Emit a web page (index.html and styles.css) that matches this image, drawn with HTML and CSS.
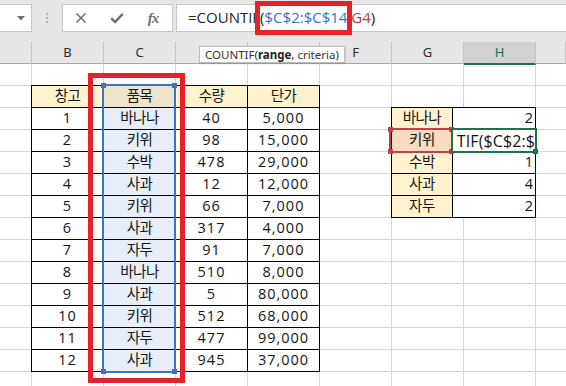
FILE: index.html
```html
<!DOCTYPE html>
<html lang="ko">
<head>
<meta charset="utf-8">
<title>COUNTIF</title>
<link rel="stylesheet" href="styles.css">
</head>
<body>
<div class="app">
  <div class="top">
    <div class="fbar">
      <div class="namebox">
        <svg class="caret" width="8" height="5" viewBox="0 0 8 5"><path d="M0 0H8L4 4.5Z" fill="#6f6f6f"/></svg>
      </div>
      <div class="grip"><i></i><i></i><i></i></div>
      <div class="btns">
        <span class="btn">
          <svg width="12" height="12" viewBox="0 0 12 12"><path d="M1.5 1.5L10.5 10.5M10.5 1.5L1.5 10.5" stroke="#6f6f6f" stroke-width="1.6" fill="none"/></svg>
        </span>
        <span class="btn">
          <svg width="14" height="12" viewBox="0 0 14 12"><path d="M1.2 6.2L5 10L12.8 1.8" stroke="#6f6f6f" stroke-width="2.4" fill="none"/></svg>
        </span>
        <span class="btn fx">fx</span>
      </div>
      <div class="finput"><span>=COUNTIF(</span><span class="ref1">$C$2:$C$14</span><span>,</span><span class="ref2">G4</span><span>)</span></div>
    </div>
    <div class="cols">
      <div class="ch"></div>
      <div class="ch">B</div>
      <div class="ch">C</div>
      <div class="ch">D</div>
      <div class="ch">E</div>
      <div class="ch">F</div>
      <div class="ch">G</div>
      <div class="ch ch-sel">H</div>
      <div class="ch"></div>
    </div>
  </div>

  <div class="sheet">
    <div class="tbl tbl-main">
      <div class="c hd">창고</div><div class="c hd csel-hd">품목</div><div class="c hd">수량</div><div class="c hd">단가</div>
      <div class="c">1</div><div class="c csel">바나나</div><div class="c">40</div><div class="c">5,000</div>
      <div class="c">2</div><div class="c csel">키위</div><div class="c">98</div><div class="c">15,000</div>
      <div class="c">3</div><div class="c csel">수박</div><div class="c">478</div><div class="c">29,000</div>
      <div class="c">4</div><div class="c csel">사과</div><div class="c">12</div><div class="c">12,000</div>
      <div class="c">5</div><div class="c csel">키위</div><div class="c">66</div><div class="c">7,000</div>
      <div class="c">6</div><div class="c csel">사과</div><div class="c">317</div><div class="c">4,000</div>
      <div class="c">7</div><div class="c csel">자두</div><div class="c">91</div><div class="c">7,000</div>
      <div class="c">8</div><div class="c csel">바나나</div><div class="c">510</div><div class="c">8,000</div>
      <div class="c">9</div><div class="c csel">사과</div><div class="c">5</div><div class="c">80,000</div>
      <div class="c">10</div><div class="c csel">키위</div><div class="c">512</div><div class="c">68,000</div>
      <div class="c">11</div><div class="c csel">자두</div><div class="c">477</div><div class="c">99,000</div>
      <div class="c">12</div><div class="c csel">사과</div><div class="c">945</div><div class="c">37,000</div>
      <div class="range-sel"><i class="h tl"></i><i class="h tr"></i><i class="h bl"></i><i class="h br"></i></div>
    </div>

    <div class="tbl tbl-side">
      <div class="c hd">바나나</div><div class="c num">2</div>
      <div class="c hd g4">키위<span class="g4-box"><i class="h tl"></i><i class="h tr"></i><i class="h bl"></i><i class="h br"></i></span></div>
      <div class="c edit"><span class="edit-text">TIF($C$2:$</span><span class="h4-box"><i class="h br"></i></span></div>
      <div class="c hd">수박</div><div class="c num">1</div>
      <div class="c hd">사과</div><div class="c num">4</div>
      <div class="c hd">자두</div><div class="c num">2</div>
    </div>
  </div>

  <div class="tooltip">COUNTIF(<b>range</b>, criteria)</div>
  <div class="mark mark-formula"></div>
  <div class="mark mark-col"></div>
</div>
</body>
</html>
```

FILE: styles.css
```css
* { box-sizing: border-box; }
html, body { margin: 0; padding: 0; }
body {
  width: 566px;
  height: 386px;
  overflow: hidden;
  background: #ffffff;
  font-family: "Noto Sans", "Noto Sans CJK KR", sans-serif;
  color: #1b1b1b;
}
.app {
  position: relative;
  width: 566px;
  height: 386px;
  overflow: hidden;
}

/* ---------- top area ---------- */
.top {
  background: #e6e6e6;
  height: 64px;
}
.fbar {
  display: flex;
  padding-top: 4px;
  height: 32px;
}
.namebox {
  width: 32px;
  height: 28px;
  background: #fff;
  border: 1px solid #c6c6c6;
  border-left: none;
  display: flex;
  align-items: center;
  justify-content: flex-end;
  padding-right: 6px;
}
.caret { display: block; }
.grip {
  width: 30px;
  display: flex;
  flex-direction: column;
  align-items: center;
  justify-content: center;
  gap: 2px;
}
.grip i {
  display: block;
  width: 2px;
  height: 2px;
  background: #b4b4b4;
}
.btns {
  width: 111px;
  height: 28px;
  background: #fff;
  border: 1px solid #c6c6c6;
  display: flex;
  align-items: center;
}
.btn {
  width: 36px;
  height: 26px;
  display: flex;
  align-items: center;
  justify-content: center;
}
.btn svg { display: block; }
.fx {
  font-family: "Liberation Serif", serif;
  font-style: italic;
  font-weight: 700;
  font-size: 15px;
  color: #707070;
  letter-spacing: -1px;
}
.finput {
  flex: 1;
  margin-left: 3px;
  height: 28px;
  background: #fff;
  border: 1px solid #c6c6c6;
  border-right: none;
  padding-left: 11px;
  font-family: "Open Sans", "Noto Sans", sans-serif;
  font-size: 15px;
  line-height: 25px;
  color: #262626;
  white-space: nowrap;
}
.ref1 { color: #3a70c8; }
.ref2 { color: #c23b3b; }

.cols {
  display: grid;
  grid-template-columns: 32px repeat(7, 72px) 1fr;
  margin-top: 10px;
  height: 22px;
  border-bottom: 1px solid #a6a6a6;
}
.ch {
  border-right: 1px solid #c4c4c4;
  font-size: 13px;
  line-height: 21px;
  text-align: center;
  color: #2b2b2b;
}
.ch-sel {
  background: #d2d2d2;
  color: #217346;
  border-bottom: 2px solid #217346;
  margin-bottom: -1px;
}

/* ---------- sheet ---------- */
.sheet {
  display: grid;
  grid-template-columns: 32px repeat(7, 72px) 1fr;
  grid-auto-rows: 22px;
  height: 322px;
  background-color: #fff;
  background-image:
    linear-gradient(to right, #d6d6d6 1px, transparent 1px),
    linear-gradient(to bottom, #d6d6d6 1px, transparent 1px);
  background-size: 72px 22px, 72px 22px;
  background-position: 31px 0, 0 21px;
}
.tbl {
  display: grid;
  grid-auto-rows: 22px;
  margin: -1px 0 0 -1px;
  border-left: 1px solid #000;
  border-top: 1px solid #000;
  font-family: "Open Sans", "Noto Sans CJK KR", sans-serif;
  font-size: 14.5px;
  position: relative;
}
.tbl-main {
  grid-column: 2 / 6;
  grid-row: 2 / 15;
  grid-template-columns: repeat(4, 1fr);
}
.tbl-side {
  grid-column: 7 / 9;
  grid-row: 3 / 8;
  grid-template-columns: repeat(2, 1fr);
}
.c {
  border-right: 1px solid #000;
  border-bottom: 1px solid #000;
  background: #fff;
  display: flex;
  align-items: center;
  justify-content: center;
  line-height: 1;
  letter-spacing: -0.5px;
  white-space: nowrap;
  color: #151515;
}
.tbl-main .c:nth-child(n+5):not(.csel),
.num { letter-spacing: 1px; font-size: 14.5px; }
.hd { background: #fff2cc; }
.csel { background: #e8eef8; }
.csel-hd { background: #ebe4c9; }
.num { justify-content: flex-end; padding-right: 1px; }

.range-sel {
  position: absolute;
  left: 70px;
  top: -2px;
  width: 74px;
  height: 289px;
  border: 2px solid #3f6fc6;
}
.h {
  position: absolute;
  width: 5px;
  height: 5px;
  background: #3f6fc6;
}
.h.tl { left: -3px; top: -3px; }
.h.tr { right: -3px; top: -3px; }
.h.bl { left: -3px; bottom: -3px; }
.h.br { right: -3px; bottom: -3px; }

.g4 { position: relative; background: #f8dbc1; }
.g4-box {
  position: absolute;
  left: -3px;
  top: -2px;
  right: -1px;
  bottom: -2px;
  border: 2px solid #c0414b;
}
.g4-box .h { background: #c0414b; }

.edit {
  position: relative;
  justify-content: flex-start;
  padding-left: 4px;
  overflow: visible;
}
.edit-text {
  display: block;
  width: 100%;
  overflow: hidden;
  font-size: 16px;
  letter-spacing: 0.1px;
  line-height: 20px;
}
.h4-box {
  position: absolute;
  left: -2px;
  top: -2px;
  right: -2px;
  bottom: -2px;
  border: 2px solid #217346;
}
.h4-box .h { background: #217346; }

/* ---------- overlays ---------- */
.tooltip {
  position: absolute;
  left: 199px;
  top: 46px;
  width: 146px;
  height: 17px;
  background: #fff;
  border: 1px solid #bdbdbd;
  font-family: "Noto Sans", sans-serif;
  font-size: 11.5px;
  line-height: 15px;
  padding-left: 5px;
  color: #333;
  white-space: nowrap;
  box-shadow: 1px 1px 2px rgba(0,0,0,0.12);
}
.tooltip b { font-weight: 700; color: #222; }

.mark {
  position: absolute;
  border: 5px solid #e8202a;
}
.mark-formula {
  left: 255px;
  top: 1px;
  width: 97px;
  height: 34px;
}
.mark-col {
  left: 88px;
  top: 73px;
  width: 97px;
  height: 310px;
}
```
